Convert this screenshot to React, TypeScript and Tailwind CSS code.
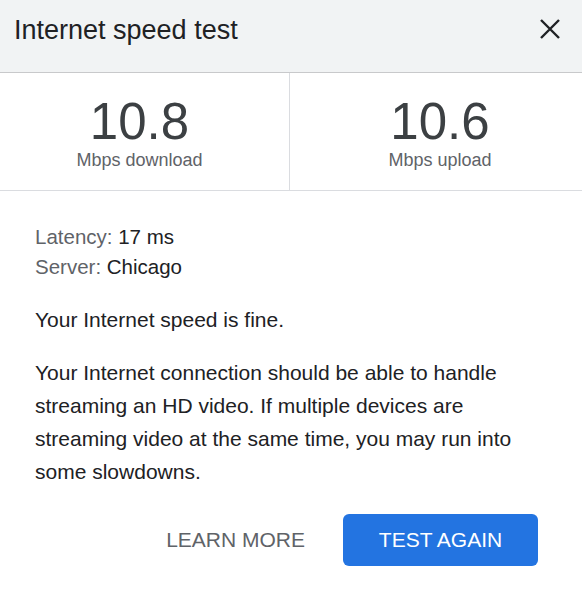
const font = { fontFamily: '"Liberation Sans", Arial, sans-serif' };

function Stat({ value, label, className }: { value: string; label: string; className: string }) {
  return (
    <div className={"flex flex-col items-center pt-[20px] " + className}>
      <div className="text-[51px] leading-[58px] text-[#3c4043]">{value}</div>
      <div className="text-[18px] leading-[20px] text-[#5f6368] -mt-[1px]">{label}</div>
    </div>
  );
}

export default function App() {
  return (
    <div className="w-[582px] h-[591px] bg-white" style={font}>
      {/* Header */}
      <div className="h-[73px] bg-[#f1f3f4] border-b border-[#c8c9cb] flex items-start justify-between pl-[14px] pr-[22px] pt-[14px]">
        <h1 className="text-[27px] leading-[32px] text-[#202124]">Internet speed test</h1>
        <svg width="20" height="20" viewBox="0 0 20 20" className="mt-[5px] text-[#202124]">
          <path d="M1 1L19 19M19 1L1 19" stroke="currentColor" strokeWidth="2.4" />
        </svg>
      </div>

      {/* Results */}
      <div className="grid grid-cols-[290px_1fr] h-[118px] border-b border-[#dadce0]">
        <Stat value="10.8" label="Mbps download" className="border-r border-[#dadce0] pr-[10px]" />
        <Stat value="10.6" label="Mbps upload" className="pl-[8px]" />
      </div>

      {/* Details */}
      <div className="pl-[35px] pr-[55px] pt-[31px]">
        <div className="text-[20.5px] leading-[30px] text-[#202124]">
          <div>
            <span className="text-[#5f6368]">Latency:</span> 17 ms
          </div>
          <div>
            <span className="text-[#5f6368]">Server:</span> Chicago
          </div>
        </div>
        <p className="mt-[21px] text-[21px] leading-[33px] text-[#202124]">Your Internet speed is fine.</p>
        <p className="mt-[20px] text-[21px] leading-[33px] text-[#202124]">
          Your Internet connection should be able to handle streaming an HD video. If multiple devices are
          streaming video at the same time, you may run into some slowdowns.
        </p>
      </div>

      {/* Actions */}
      <div className="flex items-center justify-end gap-[38px] pr-[44px] mt-[26px]">
        <button className="text-[21px] text-[#5f6368] uppercase">Learn more</button>
        <button className="w-[195px] h-[52px] rounded-[6px] bg-[#2374e1] text-white text-[21px] uppercase">
          Test again
        </button>
      </div>
    </div>
  );
}
